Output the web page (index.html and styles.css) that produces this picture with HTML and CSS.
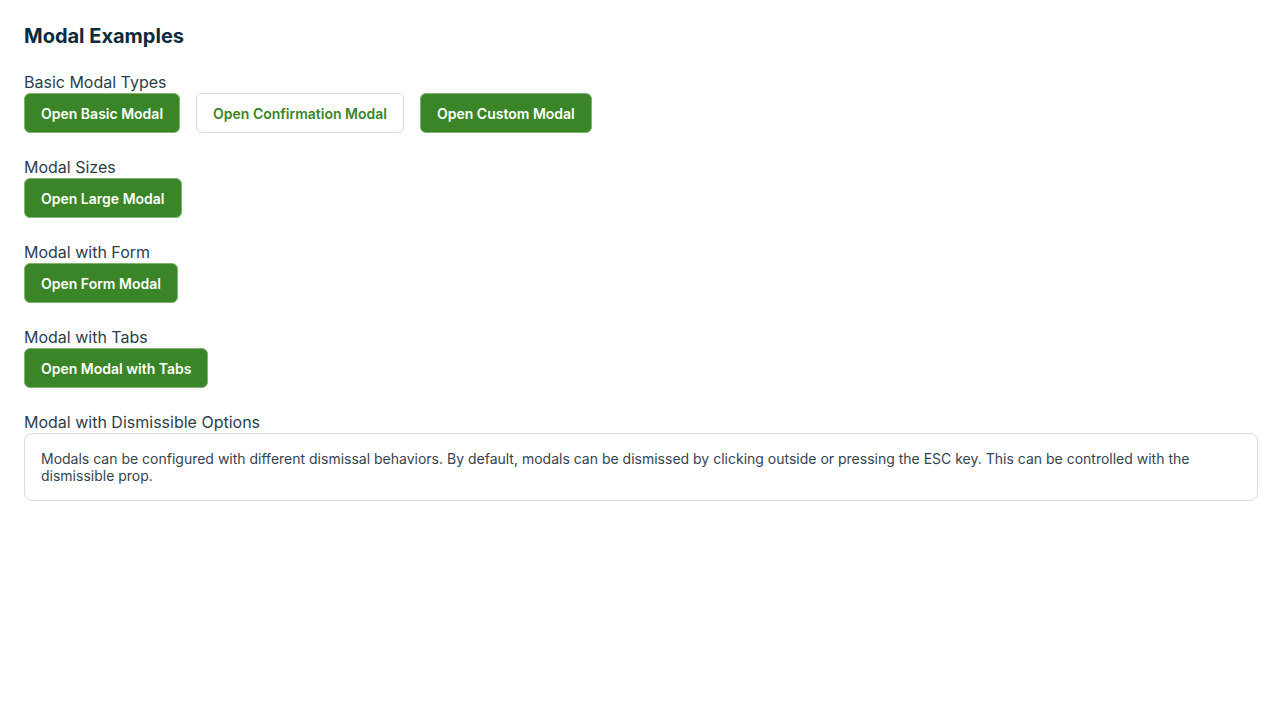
FILE: index.html
```html
<!DOCTYPE html>
<html lang="en">
<head>
<meta charset="utf-8">
<title>Modal Examples</title>
<link rel="stylesheet" href="styles.css">
</head>
<body>
<main class="page">
  <h1 class="title">Modal Examples</h1>

  <section class="group">
    <div class="label">Basic Modal Types</div>
    <div class="row">
      <button class="btn btn-primary">Open Basic Modal</button>
      <button class="btn btn-secondary">Open Confirmation Modal</button>
      <button class="btn btn-primary">Open Custom Modal</button>
    </div>
  </section>

  <section class="group">
    <div class="label">Modal Sizes</div>
    <div class="row">
      <button class="btn btn-primary">Open Large Modal</button>
    </div>
  </section>

  <section class="group">
    <div class="label">Modal with Form</div>
    <div class="row">
      <button class="btn btn-primary">Open Form Modal</button>
    </div>
  </section>

  <section class="group">
    <div class="label">Modal with Tabs</div>
    <div class="row">
      <button class="btn btn-primary">Open Modal with Tabs</button>
    </div>
  </section>

  <section class="group">
    <div class="label">Modal with Dismissible Options</div>
    <div class="card">
      <p class="card-text">Modals can be configured with different dismissal behaviors. By default, modals can be dismissed by clicking outside or pressing the ESC key. This can be controlled with the dismissible prop.</p>
    </div>
  </section>
</main>
</body>
</html>
```

FILE: styles.css
```css
* { box-sizing: border-box; }
html, body { margin: 0; padding: 0; background: #ffffff; }
body {
  font-family: Inter, "Noto Sans", "Liberation Sans", sans-serif;
  color: #2a3a47;
}
.page {
  padding: 22px 22px 24px 24px;
  display: flex;
  flex-direction: column;
}
.title {
  margin: 0 0 21px 0;
  font-size: 20px;
  line-height: 28px;
  font-weight: 700;
  color: #0c2b3c;
}
.group {
  display: flex;
  flex-direction: column;
  margin-bottom: 23px;
}
.label {
  font-size: 16px;
  line-height: 22px;
  color: #2d3e4b;
}
.row {
  display: flex;
  gap: 16px;
}
.btn {
  font-family: inherit;
  height: 40px;
  padding: 0 16px;
  border-radius: 6px;
  font-size: 14px;
  font-weight: 600;
  cursor: pointer;
}
.btn-primary {
  background: #3a8527;
  color: #ffffff;
  border: 1px solid #7fb36f;
}
.btn-secondary {
  background: #ffffff;
  color: #3a8527;
  border: 1px solid #d9dde1;
}
.card {
  border: 1px solid #d9dde1;
  border-radius: 8px;
  padding: 16px;
}
.card-text {
  margin: 0;
  font-size: 14px;
  line-height: 17px;
  color: #34444f;
}
```
